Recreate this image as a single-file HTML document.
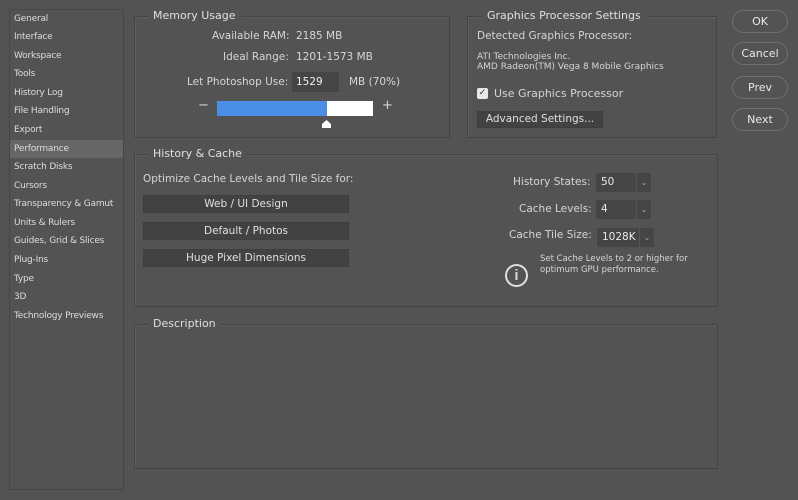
<!DOCTYPE html>
<html><head><style>
body{margin:0;width:798px;height:500px;background:#535353;font-family:"DejaVu Sans","Liberation Sans",sans-serif;color:#d6d6d6;position:relative;overflow:hidden}
.a{position:absolute;white-space:nowrap}
.side{position:absolute;left:9px;top:9px;width:115px;height:481px;border:1px solid #464646;box-sizing:border-box}
.side div{position:absolute;left:4px;font-size:9px;color:#dcdcdc;letter-spacing:-0.2px}
.box{position:absolute;border:1px solid #444;box-shadow:1px 1px 0 #5d5d5d inset;box-sizing:border-box}
.ttl{position:absolute;font-size:11px;color:#e0e0e0;background:#535353;padding:0 5px}
.btn{position:absolute;background:#424242;border:1px solid #3e3e3e;font-size:10.5px;text-align:center;color:#e0e0e0;box-sizing:border-box}
.rb{position:absolute;left:732px;width:56px;height:23px;border:1px solid #6e6e6e;border-radius:12px;box-sizing:border-box;text-align:center;font-size:11px;line-height:21px;color:#e8e8e8}
.sel{position:absolute;background:#454545;font-size:10.5px;color:#e8e8e8;box-sizing:border-box;padding-left:5px;line-height:19px;height:19px}
.sel span{position:absolute;right:0;top:0;width:14px;height:19px;border-left:1px solid #555;font-size:8px;text-align:center;color:#aaa}
.f{font-size:10.5px}
</style></head><body>
<div class="side">
<div style="top:4px">General</div>
<div style="top:22px">Interface</div>
<div style="top:41px">Workspace</div>
<div style="top:59px">Tools</div>
<div style="top:78px">History Log</div>
<div style="top:96px">File Handling</div>
<div style="top:115px">Export</div>
<div style="top:130px;left:0;width:113px;height:18px;background:#666;padding-left:4px;box-sizing:border-box;line-height:18px">Performance</div>
<div style="top:152px">Scratch Disks</div>
<div style="top:171px">Cursors</div>
<div style="top:189px">Transparency &amp; Gamut</div>
<div style="top:208px">Units &amp; Rulers</div>
<div style="top:226px">Guides, Grid &amp; Slices</div>
<div style="top:245px">Plug-Ins</div>
<div style="top:264px">Type</div>
<div style="top:282px">3D</div>
<div style="top:301px">Technology Previews</div>
</div>

<div class="box" style="left:134px;top:16px;width:316px;height:122px"></div>
<div class="ttl" style="left:148px;top:9px">Memory Usage</div>
<div class="a f" style="left:212px;top:30px">Available RAM:</div>
<div class="a f" style="left:296px;top:30px">2185 MB</div>
<div class="a f" style="left:223px;top:51px">Ideal Range:</div>
<div class="a f" style="left:296px;top:51px">1201-1573 MB</div>
<div class="a f" style="left:187px;top:76px">Let Photoshop Use:</div>
<div class="a f" style="left:292px;top:72px;width:47px;height:20px;background:#454545;line-height:20px;padding-left:4px;box-sizing:border-box;color:#eee">1529</div>
<div class="a f" style="left:349px;top:76px">MB (70%)</div>
<div class="a" style="left:198px;top:98px;font-size:13px">−</div>
<div class="a" style="left:217px;top:101px;width:110px;height:15px;background:#4a8ee6"></div>
<div class="a" style="left:327px;top:101px;width:46px;height:15px;background:#fff"></div>
<div class="a" style="left:382px;top:98px;font-size:13px">+</div>
<div class="a" style="left:322px;top:120px;width:9px;height:8px;background:#fff;clip-path:polygon(50% 0,100% 50%,100% 100%,0 100%,0 50%)"></div>

<div class="box" style="left:467px;top:16px;width:250px;height:122px"></div>
<div class="ttl" style="left:482px;top:9px">Graphics Processor Settings</div>
<div class="a f" style="left:477px;top:30px">Detected Graphics Processor:</div>
<div class="a" style="left:477px;top:52px;font-size:9px">ATI Technologies Inc.</div>
<div class="a" style="left:477px;top:62px;font-size:9px">AMD Radeon(TM) Vega 8 Mobile Graphics</div>
<div class="a" style="left:477px;top:88px;width:11px;height:11px;background:#e8e8e8;border-radius:2px;color:#333;font-size:9px;line-height:11px;text-align:center;font-weight:bold">✓</div>
<div class="a" style="left:494px;top:87px;font-size:11px">Use Graphics Processor</div>
<div class="btn" style="left:477px;top:111px;width:126px;height:17px;line-height:15px">Advanced Settings...</div>

<div class="rb" style="top:10px">OK</div>
<div class="rb" style="top:42px">Cancel</div>
<div class="rb" style="top:76px">Prev</div>
<div class="rb" style="top:108px">Next</div>

<div class="box" style="left:134px;top:154px;width:584px;height:153px"></div>
<div class="ttl" style="left:148px;top:147px">History &amp; Cache</div>
<div class="a f" style="left:143px;top:173px">Optimize Cache Levels and Tile Size for:</div>
<div class="btn" style="left:143px;top:195px;width:206px;height:18px;line-height:16px">Web / UI Design</div>
<div class="btn" style="left:143px;top:222px;width:206px;height:18px;line-height:16px">Default / Photos</div>
<div class="btn" style="left:143px;top:249px;width:206px;height:18px;line-height:16px">Huge Pixel Dimensions</div>
<div class="a f" style="left:513px;top:176px">History States:</div>
<div class="sel" style="left:596px;top:173px;width:55px">50<span>⌄</span></div>
<div class="a f" style="left:519px;top:203px">Cache Levels:</div>
<div class="sel" style="left:596px;top:200px;width:55px">4<span>⌄</span></div>
<div class="a f" style="left:509px;top:229px">Cache Tile Size:</div>
<div class="sel" style="left:597px;top:228px;width:57px">1028K<span>⌄</span></div>
<div class="a" style="left:505px;top:264px;width:23px;height:23px;border:2px solid #e0e0e0;border-radius:50%;box-sizing:border-box;text-align:center;font-size:15px;line-height:19px;font-weight:bold;font-family:'Liberation Sans',sans-serif">i</div>
<div class="a" style="left:540px;top:254px;font-size:8.5px;line-height:11px">Set Cache Levels to 2 or higher for<br>optimum GPU performance.</div>

<div class="box" style="left:134px;top:324px;width:584px;height:145px"></div>
<div class="ttl" style="left:148px;top:317px">Description</div>
</body></html>
